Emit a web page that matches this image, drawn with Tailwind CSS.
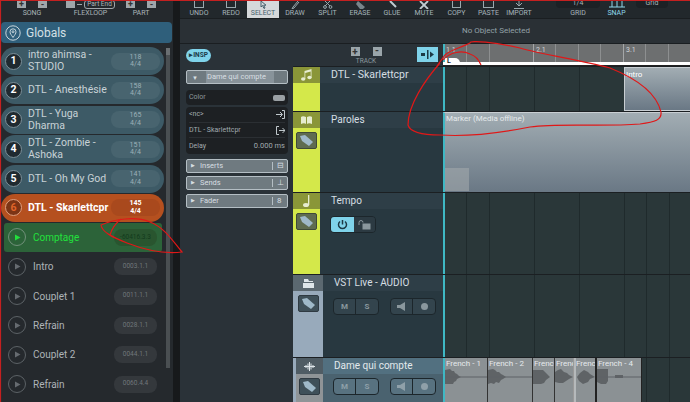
<!DOCTYPE html>
<html><head><meta charset="utf-8"><script src="https://cdn.jsdelivr.net/npm/@tailwindcss/browser@4"></script></head>
<body class="m-0">
<div class="relative w-[690px] h-[402px] overflow-hidden bg-[#23282c] font-['Roboto',sans-serif] text-[#c8d2d6] flex">
  <!-- LEFT PANEL -->
  <div class="w-[173px] h-full shrink-0 bg-[#25292d] flex flex-col relative">
    <div class="h-[18px] shrink-0 flex items-end pl-[17px] text-[7px] leading-[8px] text-[#aab4b8] pb-[1px]">
      <div class="w-[30px] flex flex-col items-center"><div class="flex gap-[12px] h-[8px] mb-[1px]"><span class="w-[9px] h-[8px] bg-[#a0a6aa] flex items-center justify-center text-[#333] font-bold text-[9px] leading-none">+</span><span class="w-[9px] h-[8px] bg-[#a0a6aa] flex items-center justify-center text-[#333] font-bold text-[9px] leading-none">-</span></div><span>SONG</span></div>
      <div class="ml-[21px] w-[45px] flex flex-col items-center"><div class="flex gap-[2px] items-center h-[8px] mb-[1px]"><span class="w-[9px] h-[8px] bg-[#a0a6aa]"></span><span class="w-[5px] h-[1px] bg-[#a0a6aa]"></span><span class="border border-[#a0a6aa] rounded-[3px] px-[2px] text-[6.5px] leading-[7px] whitespace-nowrap">Part End</span></div><span>FLEXLOOP</span></div>
      <div class="ml-[13px] w-[30px] flex flex-col items-center"><div class="flex gap-[12px] h-[8px] mb-[1px]"><span class="w-[9px] h-[8px] bg-[#a0a6aa] flex items-center justify-center text-[#333] font-bold text-[9px] leading-none">+</span><span class="w-[9px] h-[8px] bg-[#a0a6aa] flex items-center justify-center text-[#333] font-bold text-[9px] leading-none">-</span></div><span>PART</span></div>
    </div>
    <div class="mt-[4px] mx-[1px] h-[21px] rounded-[4px] bg-[#2f5f7b] flex items-center pl-[4px] gap-[5px] text-[12px] text-[#d4e0e6] shrink-0">
      <svg width="16" height="16" viewBox="0 0 16 16" fill="none" stroke="#c8d6dc"><circle cx="8" cy="8" r="7.2"/><path d="M8 12.5 C6 9.5 5 8.5 5 6.8 A3 3 0 0 1 11 6.8 C11 8.5 10 9.5 8 12.5Z"/><circle cx="8" cy="6.8" r="1"/></svg>
      <span>Globals</span>
    </div>
    <div class="mt-[4px] pl-[1px] w-[164px] flex flex-col gap-[1.4px] text-[10.5px] leading-[12px]">
      <div class="h-[28px] rounded-[14px] bg-[#3d5a66] flex items-center pl-[4px] pr-[3px]"><span class="w-[17px] h-[17px] rounded-full bg-[#1f2a30] border border-[#7c8f98] flex items-center justify-center text-white font-bold shrink-0">1</span><span class="ml-[6px] w-[83px] shrink-0">intro ahimsa - STUDIO</span><span class="w-[49px] h-[17px] rounded-[8px] bg-[#48646f] text-[7px] leading-[7.5px] text-[#9db0b8] flex items-center justify-center text-center">118<br>4/4</span></div>
      <div class="h-[28px] rounded-[14px] bg-[#3d5a66] flex items-center pl-[4px] pr-[3px]"><span class="w-[17px] h-[17px] rounded-full bg-[#1f2a30] border border-[#7c8f98] flex items-center justify-center text-white font-bold shrink-0">2</span><span class="ml-[6px] w-[83px] shrink-0 whitespace-nowrap">DTL - Anesthésie</span><span class="w-[49px] h-[17px] rounded-[8px] bg-[#48646f] text-[7px] leading-[7.5px] text-[#9db0b8] flex items-center justify-center text-center">158<br>4/4</span></div>
      <div class="h-[28px] rounded-[14px] bg-[#3d5a66] flex items-center pl-[4px] pr-[3px]"><span class="w-[17px] h-[17px] rounded-full bg-[#1f2a30] border border-[#7c8f98] flex items-center justify-center text-white font-bold shrink-0">3</span><span class="ml-[6px] w-[70px] mr-[13px] shrink-0">DTL - Yuga Dharma</span><span class="w-[49px] h-[17px] rounded-[8px] bg-[#48646f] text-[7px] leading-[7.5px] text-[#9db0b8] flex items-center justify-center text-center">165<br>4/4</span></div>
      <div class="h-[28px] rounded-[14px] bg-[#3d5a66] flex items-center pl-[4px] pr-[3px]"><span class="w-[17px] h-[17px] rounded-full bg-[#1f2a30] border border-[#7c8f98] flex items-center justify-center text-white font-bold shrink-0">4</span><span class="ml-[6px] w-[70px] mr-[13px] shrink-0">DTL - Zombie - Ashoka</span><span class="w-[49px] h-[17px] rounded-[8px] bg-[#48646f] text-[7px] leading-[7.5px] text-[#9db0b8] flex items-center justify-center text-center">151<br>4/4</span></div>
      <div class="h-[28px] rounded-[14px] bg-[#3d5a66] flex items-center pl-[4px] pr-[3px]"><span class="w-[17px] h-[17px] rounded-full bg-[#1f2a30] border border-[#7c8f98] flex items-center justify-center text-white font-bold shrink-0">5</span><span class="ml-[6px] w-[83px] shrink-0 whitespace-nowrap">DTL - Oh My God</span><span class="w-[49px] h-[17px] rounded-[8px] bg-[#48646f] text-[7px] leading-[7.5px] text-[#9db0b8] flex items-center justify-center text-center">141<br>4/4</span></div>
      <div class="h-[28px] rounded-[14px] bg-[#b5501f] flex items-center pl-[4px] pr-[3px]"><span class="w-[17px] h-[17px] rounded-full bg-[#7c3415] border border-[#e0a080] flex items-center justify-center text-[#e0652a] font-bold shrink-0">6</span><span class="ml-[6px] w-[83px] shrink-0 whitespace-nowrap font-bold text-white">DTL - Skarlettcpr</span><span class="w-[49px] h-[17px] rounded-[8px] bg-[#a9491d] text-[7px] leading-[7.5px] font-bold text-white flex items-center justify-center text-center">145<br>4/4</span></div>
    </div>
    <div class="flex flex-col w-[166px] text-[10px] text-[#aeb4b8] mt-[1px]">
      <div class="mx-[4px] h-[29px] rounded-[3px] bg-[#2c6339] flex items-center pl-[4px] text-[#22e03c]"><span class="w-[18px] h-[18px] rounded-full border border-[#71907a] flex items-center justify-center shrink-0"><svg width="7" height="7" viewBox="0 0 7 7"><path d="M1 0.5L6.5 3.5L1 6.5Z" fill="#22e03c"/></svg></span><span class="ml-[7px] w-[81px] shrink-0">Comptage</span><span class="w-[43px] h-[17px] rounded-[8px] bg-[#29552f] text-[6.5px] text-[#123a1c] flex items-center justify-center shrink-0">-60416.3.3</span></div>
      <div class="h-[29.4px] flex items-center pl-[8px]"><span class="w-[18px] h-[18px] rounded-full border border-[#5c6266] flex items-center justify-center shrink-0"><svg width="7" height="7" viewBox="0 0 7 7"><path d="M1 0.5L6.5 3.5L1 6.5Z" fill="#666b70"/></svg></span><span class="ml-[7px] w-[81px] shrink-0">Intro</span><span class="w-[43px] h-[17px] rounded-[8px] bg-[#34383c] text-[6.5px] text-[#71777b] flex items-center justify-center shrink-0">0003.1.1</span></div>
      <div class="h-[29.4px] flex items-center pl-[8px]"><span class="w-[18px] h-[18px] rounded-full border border-[#5c6266] flex items-center justify-center shrink-0"><svg width="7" height="7" viewBox="0 0 7 7"><path d="M1 0.5L6.5 3.5L1 6.5Z" fill="#666b70"/></svg></span><span class="ml-[7px] w-[81px] shrink-0">Couplet 1</span><span class="w-[43px] h-[17px] rounded-[8px] bg-[#34383c] text-[6.5px] text-[#71777b] flex items-center justify-center shrink-0">0011.1.1</span></div>
      <div class="h-[29.4px] flex items-center pl-[8px]"><span class="w-[18px] h-[18px] rounded-full border border-[#5c6266] flex items-center justify-center shrink-0"><svg width="7" height="7" viewBox="0 0 7 7"><path d="M1 0.5L6.5 3.5L1 6.5Z" fill="#666b70"/></svg></span><span class="ml-[7px] w-[81px] shrink-0">Refrain</span><span class="w-[43px] h-[17px] rounded-[8px] bg-[#34383c] text-[6.5px] text-[#71777b] flex items-center justify-center shrink-0">0028.1.1</span></div>
      <div class="h-[29.4px] flex items-center pl-[8px]"><span class="w-[18px] h-[18px] rounded-full border border-[#5c6266] flex items-center justify-center shrink-0"><svg width="7" height="7" viewBox="0 0 7 7"><path d="M1 0.5L6.5 3.5L1 6.5Z" fill="#666b70"/></svg></span><span class="ml-[7px] w-[81px] shrink-0">Couplet 2</span><span class="w-[43px] h-[17px] rounded-[8px] bg-[#34383c] text-[6.5px] text-[#71777b] flex items-center justify-center shrink-0">0044.1.1</span></div>
      <div class="h-[29.4px] flex items-center pl-[8px]"><span class="w-[18px] h-[18px] rounded-full border border-[#5c6266] flex items-center justify-center shrink-0"><svg width="7" height="7" viewBox="0 0 7 7"><path d="M1 0.5L6.5 3.5L1 6.5Z" fill="#666b70"/></svg></span><span class="ml-[7px] w-[81px] shrink-0">Refrain</span><span class="w-[43px] h-[17px] rounded-[8px] bg-[#34383c] text-[6.5px] text-[#71777b] flex items-center justify-center shrink-0">0060.4.4</span></div>
    </div>
    <div class="absolute left-[166px] top-[48px] w-[4px] h-[320px] bg-[#4a4f52]"><div class="w-full h-[7px] bg-[#6a6f72]"></div></div>
  </div>
  <div class="w-[7px] h-full shrink-0 bg-[#17191b]"></div>
  <!-- RIGHT -->
  <div class="flex-1 flex flex-col min-w-0">
    <div class="h-[18px] shrink-0 bg-[#22282c] flex items-start text-[7px] leading-[8px] text-[#a6b4ba] pl-[3px]">
      <div class="w-[32px] h-full flex flex-col items-center justify-end pb-[1px]"><span class="w-[10px] h-[7px] border-x border-b border-[#9aa8ae] mb-[1px]"></span>UNDO</div>
      <div class="w-[32px] h-full flex flex-col items-center justify-end pb-[1px]"><span class="w-[10px] h-[7px] border-x border-b border-[#9aa8ae] mb-[1px]"></span>REDO</div>
      <div class="w-[32px] h-full bg-[#d5d8da] text-[#47606c] flex flex-col items-center justify-end pb-[1px]"><svg width="9" height="8" viewBox="0 0 9 8" fill="none" stroke="#47606c"><path d="M2 0V6L3.5 4.5L5 7.5L6 7L4.7 4.2H7Z"/></svg>SELECT</div>
      <div class="w-[32px] h-full flex flex-col items-center justify-end pb-[1px]"><svg width="10" height="8" viewBox="0 0 10 8" fill="none" stroke="#9aa8ae"><path d="M8 0L3 6L2 8L4 7L9 1"/></svg>DRAW</div>
      <div class="w-[33px] h-full flex flex-col items-center justify-end pb-[1px]"><svg width="10" height="8" viewBox="0 0 10 8" fill="none" stroke="#9aa8ae"><path d="M2 0L7 5M7 0L2 5"/><circle cx="2" cy="6" r="1.4"/><circle cx="7.5" cy="6" r="1.4"/></svg>SPLIT</div>
      <div class="w-[32px] h-full flex flex-col items-center justify-end pb-[1px]"><svg width="12" height="8" viewBox="0 0 12 8" fill="#78858b"><path d="M4 0L11 6L9 8L6 8L2 3Z"/></svg>ERASE</div>
      <div class="w-[32px] h-full flex flex-col items-center justify-end pb-[1px]"><svg width="10" height="8" viewBox="0 0 10 8" fill="none" stroke="#c0ccd2" stroke-width="2"><path d="M3 0L9 6"/></svg>GLUE</div>
      <div class="w-[32px] h-full flex flex-col items-center justify-end pb-[1px]"><svg width="10" height="8" viewBox="0 0 10 8" fill="none" stroke="#c0ccd2" stroke-width="1.8"><path d="M1 0L9 8M9 0L1 8"/></svg>MUTE</div>
      <div class="w-[33px] h-full flex flex-col items-center justify-end pb-[1px]"><span class="w-[9px] h-[7px] border-x border-b border-[#9aa8ae] mb-[1px]"></span>COPY</div>
      <div class="w-[31px] h-full flex flex-col items-center justify-end pb-[1px]"><span class="w-[11px] h-[7px] border-x border-b border-[#9aa8ae] mb-[1px]"></span>PASTE</div>
      <div class="w-[30px] h-full flex flex-col items-center justify-end pb-[1px]"><svg width="12" height="8" viewBox="0 0 12 8" fill="none" stroke="#9aa8ae"><path d="M6 0V4M3 2L6 5L9 2M1 7.5H11"/></svg>IMPORT</div>
      <div class="ml-[22px] w-[44px] h-full flex flex-col items-center justify-end pb-[1px]"><span class="w-[44px] h-[8px] bg-[#1c2125] rounded-b-[4px] text-center leading-[6px] mb-[1px]">1/4</span>GRID</div>
      <div class="ml-[5px] w-[23px] h-full flex flex-col items-center justify-end pb-[1px] text-[#8fd6ea]"><svg width="16" height="8" viewBox="0 0 16 8" fill="none" stroke="#8fd6ea"><path d="M3 0V6M8 0V6M13 0V6M0 6H16"/></svg>SNAP</div>
      <div class="ml-[8px] w-[32px] h-[8px] bg-[#1c2125] rounded-b-[4px] text-center leading-[7px]">Grid</div>
    </div>
    <div class="h-[26px] shrink-0 bg-[#2a3035] border-y border-[#1a1e21] flex items-center pl-[282px] text-[8px] text-[#93a1a8]">No Object Selected</div>
    <div class="flex-1 flex min-h-0">
      <!-- inspector -->
      <div class="w-[113px] shrink-0 bg-[#2a3238] flex flex-col pl-[6px] pr-[5px]">
        <div class="h-[21px] flex items-center mb-[4px] mt-[1px]"><span class="w-[25px] h-[13px] rounded-full bg-[#7fd3ea] text-[#1c3a46] text-[6.5px] font-bold flex items-center justify-center">▸INSP</span></div>
        <div class="h-[14px] bg-[#6f7a80] border border-[#b4bec4] rounded-[2px] flex items-center text-[7.5px] text-[#d8dfe2] pl-[5px]"><span class="text-[6px]">▼</span><span class="ml-[8px] bg-[#88939a] h-full w-[68px] flex items-center pl-[1px]">Dame qui compte</span></div>
        <div class="mt-[6px] h-[15px] rounded-[4px] bg-[#1d2023] flex items-center justify-between px-[3px] text-[7px] text-[#8d979c]">Color<span class="w-[12px] h-[6px] rounded-[2px] bg-[#9aa0a4]"></span></div>
        <div class="mt-[2px] h-[47px] rounded-[4px] bg-[#1d2023] flex flex-col text-[7px] text-[#a1abaf] px-[3px]">
          <div class="h-[16px] flex items-center justify-between border-b border-[#2b2f33]">&lt;nc&gt;<svg width="9" height="9" viewBox="0 0 9 9" fill="none" stroke="#c0c8cc"><path d="M0 4.5H6M4 2L6.5 4.5L4 7M6 0.5H8.5V8.5H6"/></svg></div>
          <div class="h-[15px] flex items-center justify-between border-b border-[#2b2f33]">DTL - Skarlettcpr<svg width="9" height="9" viewBox="0 0 9 9" fill="none" stroke="#c0c8cc"><path d="M3 0.5H0.5V8.5H3M3 4.5H9M6.5 2L9 4.5L6.5 7"/></svg></div>
          <div class="h-[16px] flex items-center justify-between">Delay<span class="text-[7.5px]">0.000 ms</span></div>
        </div>
        <div class="mt-[5px] h-[14px] bg-[#6f7a80] border border-[#b4bec4] rounded-[2px] flex items-center text-[7.5px] text-[#d8dfe2] pl-[4px]"><span class="text-[5px]">▶</span><span class="ml-[5px] w-[72px]">Inserts</span><span class="border-l border-[#b4bec4] pl-[4px] text-[8px] leading-none">⊟</span></div>
        <div class="mt-[3px] h-[14px] bg-[#6f7a80] border border-[#b4bec4] rounded-[2px] flex items-center text-[7.5px] text-[#d8dfe2] pl-[4px]"><span class="text-[5px]">▶</span><span class="ml-[5px] w-[72px]">Sends</span><span class="border-l border-[#b4bec4] pl-[4px] text-[8px] leading-none">⊥</span></div>
        <div class="mt-[4px] h-[14px] bg-[#6f7a80] border border-[#b4bec4] rounded-[2px] flex items-center text-[7.5px] text-[#d8dfe2] pl-[4px]"><span class="text-[5px]">▶</span><span class="ml-[5px] w-[72px]">Fader</span><span class="border-l border-[#b4bec4] pl-[4px] text-[8px] leading-none">8</span></div>
      </div>
      <!-- tracks + timeline -->
      <div class="flex-1 flex flex-col min-w-0">
        <!-- header row -->
        <div class="h-[22px] shrink-0 flex">
          <div class="w-[150px] shrink-0 bg-[#2a3238] relative flex flex-col items-center pr-[4px]">
            <div class="flex gap-[13px] mt-[3px]"><span class="w-[9px] h-[9px] bg-[#9aa5aa] text-[#333] text-[10px] leading-[9px] font-bold text-center">+</span><span class="w-[9px] h-[9px] bg-[#9aa5aa] text-[#333] text-[10px] leading-[8px] font-bold text-center">-</span></div>
            <span class="text-[6.5px] leading-[8px] text-[#8a979d] mt-[1px]">TRACK</span>
            <span class="absolute right-[5px] top-[3px] w-[21px] h-[15px] bg-[#7fd3ea] flex items-center justify-center"><svg width="14" height="9" viewBox="0 0 14 9" fill="#1c3a46"><rect x="0" y="3" width="4" height="3"/><rect x="6" y="0" width="1.5" height="9"/><path d="M9 1.5L13 4.5L9 7.5Z"/></svg></span>
          </div>
          <div class="flex-1 flex flex-col">
            <div class="h-[18px] flex text-[7px] leading-[12px] text-[#d2d4d6] bg-[#6d6f70] border-l-2 border-[#3fb8c4]">
              <div class="w-[89px] shrink-0 pl-[1px] border-r border-[#a5a7a8] bg-[repeating-linear-gradient(90deg,transparent_0,transparent_21.5px,#8d8f90_21.5px,#8d8f90_22.5px)]">1.1</div>
              <div class="w-[90px] shrink-0 pl-[2px] border-r border-[#a5a7a8] bg-[repeating-linear-gradient(90deg,transparent_0,transparent_21.5px,#8d8f90_21.5px,#8d8f90_22.5px)]">2.1</div>
              <div class="flex-1 pl-[2px] bg-[repeating-linear-gradient(90deg,transparent_0,transparent_21.5px,#8d8f90_21.5px,#8d8f90_22.5px)]">3.1</div>
            </div>
            <div class="h-[4px] bg-white relative border-b border-[#222]"><span class="absolute left-[2px] -top-[4px] w-[15px] h-[7px] bg-white rounded-tr-[5px] text-[7px] leading-[7px] font-bold text-[#222] pl-[2px]">L</span></div>
          </div>
        </div>
        <!-- tracks -->
        <div class="flex-1 flex flex-col min-h-0 bg-[#1c2023]">
          <div class="h-[45px] shrink-0 flex border-t border-[#1b1f22]">
            <div class="w-[27px] shrink-0 bg-[#d4e84a] flex flex-col"><div class="h-[16px] bg-[#8a9638] flex items-center justify-center"><svg width="11" height="12" viewBox="0 0 11 12" fill="#e6ecd0"><ellipse cx="2.2" cy="10" rx="2.2" ry="1.7"/><ellipse cx="8.5" cy="8.5" rx="2.2" ry="1.7"/><path d="M3.5 10V2L10.5 0V8.5H9.7V2.5L4.3 4V10Z"/></svg></div></div>
            <div class="w-[123px] shrink-0 bg-[#283840] flex flex-col"><div class="h-[16px] bg-[#2e3e47] text-[10.5px] text-[#d6dfe3] pl-[11px] leading-[16px]">DTL - Skarlettcpr</div></div>
            <div class="flex-1 bg-[#2a3739] border-l-2 border-[#3fb8c4] flex justify-end bg-[repeating-linear-gradient(90deg,transparent_0,transparent_21.5px,#1f2a2c_21.5px,#1f2a2c_22.5px)]">
              <div class="w-[66px] h-full bg-gradient-to-b from-[#a2adb3] to-[#6a7885] border-l border-b border-t border-[#c8ced2] text-[8px] text-white pl-[1px] leading-[14px]">Intro</div>
            </div>
          </div>
          <div class="h-[81px] shrink-0 flex border-t border-[#1b1f22]">
            <div class="w-[27px] shrink-0 bg-[#d4e84a] flex flex-col items-center"><div class="w-full h-[16px] bg-[#8a9638] flex items-center justify-center"><svg width="11" height="9" viewBox="0 0 11 9" fill="#e6ecd0"><path d="M5 1C3 0 1 0 0 1V8C2 7 4 7 5 8ZM6 1C8 0 10 0 11 1V8C9 7 7 7 6 8Z"/></svg></div><span class="mt-[4px] w-[21px] h-[17px] bg-[#5f6c50] rounded-[2px] border border-[#3f4a38] flex items-center justify-center"><svg width="15" height="13" viewBox="0 0 15 13" fill="#9fb9c9"><path d="M1 2L6 1L14 8L10 12L3 7Z"/></svg></span></div>
            <div class="w-[123px] shrink-0 bg-[#283840] flex flex-col"><div class="h-[16px] bg-[#2e3e47] text-[10px] text-[#d6dfe3] pl-[11px] leading-[16px]">Paroles</div></div>
            <div class="flex-1 border-l-2 border-[#3fb8c4] flex flex-col justify-between bg-gradient-to-b from-[#a2adb3] to-[#6a7885] border-t border-t-[#c8ced2] text-[8px] text-[#e6eaec] pl-[1px] leading-[12px]">Marker (Media offline)<span class="-ml-[1px] mb-[1px] w-[24px] h-[23px] bg-[#a2a8ac]/60"></span></div>
          </div>
          <div class="h-[82px] shrink-0 flex border-t border-[#1b1f22]">
            <div class="w-[27px] shrink-0 bg-[#d4e84a] flex flex-col items-center"><div class="w-full h-[16px] bg-[#8a9638] flex items-center justify-center"><svg width="8" height="12" viewBox="0 0 8 12" fill="#e6ecd0"><ellipse cx="3" cy="10" rx="3" ry="2"/><rect x="5" y="0" width="1.3" height="10"/></svg></div><span class="mt-[4px] w-[21px] h-[17px] bg-[#5f6c50] rounded-[2px] border border-[#3f4a38] flex items-center justify-center"><svg width="15" height="13" viewBox="0 0 15 13" fill="#9fb9c9"><path d="M1 2L6 1L14 8L10 12L3 7Z"/></svg></span></div>
            <div class="w-[123px] shrink-0 bg-[#283840] flex flex-col"><div class="h-[16px] bg-[#2e3e47] text-[10px] text-[#d6dfe3] pl-[11px] leading-[16px]">Tempo</div>
              <div class="ml-[10px] mt-[7px] w-[46px] h-[17px] rounded-[4px] border border-[#1c262b] flex"><span class="w-[23px] bg-[#7fd3ea] rounded-l-[3px] flex items-center justify-center"><svg width="11" height="11" viewBox="0 0 11 11" fill="none" stroke="#1c3a46" stroke-width="1.5"><path d="M5.5 1V5.5M3 2.5A4 4 0 1 0 8 2.5"/></svg></span><span class="flex-1 bg-[#2c3a42] rounded-r-[3px] flex items-center justify-center"><svg width="13" height="10" viewBox="0 0 13 10" fill="none" stroke="#8a979d"><path d="M1 5V2.5A2 2 0 0 1 5 2.5"/><rect x="5" y="4" width="7" height="5" fill="#8a979d"/></svg></span></div>
            </div>
            <div class="flex-1 bg-[#2a3739] border-l-2 border-[#3fb8c4] bg-[repeating-linear-gradient(90deg,transparent_0,transparent_21.5px,#1f2a2c_21.5px,#1f2a2c_22.5px)]"></div>
          </div>
          <div class="h-[83px] shrink-0 flex border-t border-[#1b1f22]">
            <div class="w-[30px] shrink-0 bg-[#98aabb] flex flex-col items-center"><div class="w-full h-[16px] bg-[#5b6870] flex items-center justify-center"><svg width="11" height="9" viewBox="0 0 11 9" fill="#dfe6ea"><path d="M1 0H5L6 2H10V3H1ZM0 4H11V9H0Z"/></svg></div><span class="mt-[4px] w-[21px] h-[17px] bg-[#3f5059] rounded-[2px] border border-[#2f3a42] flex items-center justify-center"><svg width="15" height="13" viewBox="0 0 15 13" fill="#9fb9c9"><path d="M1 2L6 1L14 8L10 12L3 7Z"/></svg></span></div>
            <div class="w-[120px] shrink-0 bg-[#283840] flex flex-col"><div class="h-[16px] bg-[#2e3e47] text-[10px] text-[#d6dfe3] pl-[11px] leading-[16px]">VST Live - AUDIO</div>
              <div class="ml-[10px] mt-[7px] flex gap-[11px]">
                <div class="w-[46px] h-[17px] rounded-[4px] border border-[#1c262b] bg-[#33444d] flex text-[8px] font-bold text-[#8a979d]"><span class="w-1/2 flex items-center justify-center border-r border-[#1c262b]">M</span><span class="w-1/2 flex items-center justify-center">S</span></div>
                <div class="w-[46px] h-[17px] rounded-[4px] border border-[#1c262b] bg-[#33444d] flex"><span class="w-1/2 flex items-center justify-center border-r border-[#1c262b]"><svg width="9" height="9" viewBox="0 0 9 9" fill="#8a979d"><path d="M0 3H3L8 0V9L3 6H0Z"/></svg></span><span class="w-1/2 flex items-center justify-center"><span class="w-[7px] h-[7px] rounded-full bg-[#8a979d]"></span></span></div>
              </div>
            </div>
            <div class="flex-1 bg-[#2a3739] border-l-2 border-[#3fb8c4] bg-[repeating-linear-gradient(90deg,transparent_0,transparent_21.5px,#1f2a2c_21.5px,#1f2a2c_22.5px)]"></div>
          </div>
          <div class="flex-1 flex border-t border-[#1b1f22]">
            <div class="w-[3px] shrink-0 bg-[#98aabb]"></div>
            <div class="w-[27px] shrink-0 bg-[#8f9497] flex flex-col items-center"><div class="w-full h-[16px] bg-[#4f5c64] flex items-center justify-center"><svg width="11" height="9" viewBox="0 0 11 9" fill="none" stroke="#dfe6ea"><path d="M0 4.5H11M2 3V6M4 1.5V7.5M5.5 0V9M7 1.5V7.5M9 3V6"/></svg></div><span class="mt-[4px] w-[21px] h-[17px] bg-[#3f5059] rounded-[2px] border border-[#2f3a42] flex items-center justify-center"><svg width="15" height="13" viewBox="0 0 15 13" fill="#9fb9c9"><path d="M1 2L6 1L14 8L10 12L3 7Z"/></svg></span></div>
            <div class="w-[120px] shrink-0 bg-[#4a626f] flex flex-col"><div class="h-[16px] bg-[#527080] text-[10px] text-[#e2e9ec] pl-[11px] leading-[16px]">Dame qui compte</div>
              <div class="ml-[10px] mt-[4px] flex gap-[11px]">
                <div class="w-[46px] h-[17px] rounded-[4px] border border-[#1c262b] bg-[#587280] flex text-[8px] font-bold text-[#8fa0a9]"><span class="w-1/2 flex items-center justify-center border-r border-[#1c262b]">M</span><span class="w-1/2 flex items-center justify-center">S</span></div>
                <div class="w-[46px] h-[17px] rounded-[4px] border border-[#1c262b] bg-[#587280] flex"><span class="w-1/2 flex items-center justify-center border-r border-[#1c262b]"><svg width="9" height="9" viewBox="0 0 9 9" fill="#8fa0a9"><path d="M0 3H3L8 0V9L3 6H0Z"/></svg></span><span class="w-1/2 flex items-center justify-center"><span class="w-[7px] h-[7px] rounded-full bg-[#8fa0a9]"></span></span></div>
              </div>
            </div>
            <div class="flex-1 bg-[#2a3739] border-l-2 border-[#3fb8c4] flex text-[8px] text-[#e6eaec] leading-[11px] bg-[repeating-linear-gradient(90deg,transparent_0,transparent_21.5px,#1f2a2c_21.5px,#1f2a2c_22.5px)]">
              <div class="w-[43px] bg-[#8b9194] border-r border-[#333] pl-[1px] overflow-hidden whitespace-nowrap">French - 1<svg class="-ml-[1px] block" width="43" height="24" viewBox="0 0 43 24" fill="#5f6366"><path d="M0 1L5 0L7 2H9L10 4L12 5L14 7L16 8L12 10L11 12L9 13L8 15H0Z"/><rect y="7.5" width="43" height="1"/></svg></div>
              <div class="w-[45px] bg-[#8b9194] border-r border-[#333] pl-[1px] overflow-hidden whitespace-nowrap">French - 2<svg class="-ml-[1px] block" width="45" height="24" viewBox="0 0 45 24" fill="#5f6366"><path d="M0 1L5 0L7 1L9 3H11L13 5L15 6L18 8L15 10L13 11L11 14L8 13L6 15L3 14L0 15Z"/><rect y="7.5" width="45" height="1"/></svg></div>
              <div class="w-[22px] bg-[#8b9194] border-r border-[#333] pl-[1px] overflow-hidden whitespace-nowrap">French<svg class="-ml-[1px] block" width="22" height="24" viewBox="0 0 22 24" fill="#5f6366"><path d="M0 1H10L12 3L14 5L17 8L13 11L11 14L8 15H0Z"/></svg></div>
              <div class="w-[19px] bg-[#8b9194] border-r border-[#999] pl-[1px] overflow-hidden whitespace-nowrap">French<svg class="-ml-[1px] block" width="19" height="24" viewBox="0 0 19 24" fill="#5f6366"><path d="M0 3L3 1L6 0L9 3L12 4L14 6L18 8L14 10L11 12L8 14L4 14L0 13Z"/></svg></div>
              <div class="w-[22px] bg-[#8b9194] border-r border-[#222] border-l-2 border-l-[#b5b9bb] overflow-hidden whitespace-nowrap">French<svg class="block" width="20" height="24" viewBox="0 0 20 24" fill="#5f6366"><path d="M1 8L4 4L8 1L12 3L14 5L19 8L14 10L12 13L7 15L3 12Z"/></svg></div>
              <div class="w-[46px] bg-[#8b9194] border-l border-[#222] border-r border-r-[#222] pl-[1px] overflow-hidden whitespace-nowrap">French - 4<svg class="-ml-[1px] block" width="45" height="24" viewBox="0 0 45 24" fill="#5f6366"><path d="M0 0H11V12L9 15H4L0 13ZM18 6H26V9H18Z"/><rect y="7.5" width="45" height="1"/></svg></div>
            </div>
          </div>
        </div>
      </div>
    </div>
  </div>
  <!-- annotations -->
  <svg class="absolute inset-0 pointer-events-none" width="690" height="402" viewBox="0 0 690 402" fill="none" stroke="#e01818" stroke-width="1.2">
    <path d="M0 0.5H690M0.5 0V402" stroke="#c42020"/>
    <path d="M440 63C425 80 408 105 408 125C410 132 420 135 440 135C470 137 500 133 530 127C560 123 600 127 640 124C655 122 662 120 661 112C657 95 640 80 610 68C580 60 545 55 520 48C495 42 470 40 470 43C460 48 450 50 445 55L437 66"/>
    <path d="M443 60C450 52 462 50 470 54C476 56 479 60 481 65"/>
    <path d="M101 225C115 219 135 216 150 222C165 228 172 240 182 252C165 254 145 250 127 243C112 237 102 232 101 225ZM110 235C112 228 116 223 121 219"/>
  </svg>
</div>
</body></html>
